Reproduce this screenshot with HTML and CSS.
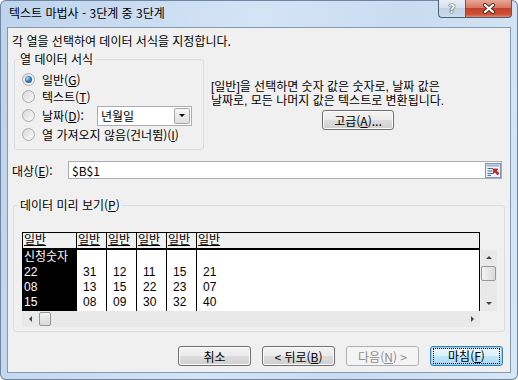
FILE: index.html
```html
<!DOCTYPE html>
<html lang="ko">
<head>
    <meta charset="UTF-8">
    <title>텍스트 마법사 - 3단계 중 3단계</title>
    <link rel="stylesheet" href="styles.css">
</head>
<body>

    <div class="window">
        <!-- 제목 표시줄 -->
        <div class="titlebar">
            <span class="title">텍스트 마법사 - 3단계 중 3단계</span>
            <div class="caption-btns">
                <span class="cap help">?</span>
                <span class="cap close">
                    <svg width="14" height="11" viewBox="0 0 14 11">
                        <path d="M3 2 L11 9 M11 2 L3 9" stroke="#4a2a22" stroke-width="4" stroke-linecap="round"/>
                        <path d="M3 2 L11 9 M11 2 L3 9" stroke="#fff" stroke-width="2.2" stroke-linecap="round"/>
                    </svg>
                </span>
            </div>
        </div>

        <div class="client">
            <p class="intro">각 열을 선택하여 데이터 서식을 지정합니다.</p>

            <!-- 열 데이터 서식 -->
            <div class="format-row">
                <fieldset class="group format-group">
                    <legend>열 데이터 서식</legend>
                    <div class="radio-row"><span class="radio on"></span>일반(<u>G</u>)</div>
                    <div class="radio-row"><span class="radio"></span>텍스트(<u>T</u>)</div>
                    <div class="radio-row date-row">
                        <span class="radio"></span><span class="date-label">날짜(<u>D</u>):</span>
                        <span class="combo">년월일<span class="combo-arrow"><span class="tri-down"></span></span></span>
                    </div>
                    <div class="radio-row"><span class="radio"></span>열 가져오지 않음(건너뜀)(<u>I</u>)</div>
                </fieldset>
                <div class="format-info">
                    <p class="desc">[일반]을 선택하면 숫자 값은 숫자로, 날짜 값은<br>날짜로, 모든 나머지 값은 텍스트로 변환됩니다.</p>
                    <button class="btn adv">고급(<u>A</u>)...</button>
                </div>
            </div>

            <!-- 대상 -->
            <div class="target">
                <span class="target-label">대상(<u>E</u>):</span>
                <span class="textbox">$B$1
                    <svg class="ref-icon" width="16" height="15" viewBox="0 0 16 15">
                        <rect x="0.5" y="0.5" width="15" height="14" fill="#e9eff7" stroke="#8797ab"/>
                        <rect x="1.5" y="1.5" width="13" height="2" fill="#9fb4cf"/>
                        <path d="M2.5 5.5 H8 M2.5 8 H7 M2.5 10.5 H8 M2.5 12.5 H6" stroke="#4d6f9c"/>
                        <path d="M8 6 L13 6 L11.5 7.5 L14 10.5 L12.5 12 L10 9 L8.5 10.5 Z" fill="#d8261c" stroke="#8b120c" stroke-width="0.6"/>
                    </svg>
                </span>
            </div>

            <!-- 데이터 미리 보기 -->
            <fieldset class="group preview-group">
                <legend>데이터 미리 보기(<u>P</u>)</legend>
                <div class="preview">
                    <div class="pv-head">
                        <span class="pv-cell c1"><u>일반</u></span>
                        <span class="pv-cell"><u>일반</u></span>
                        <span class="pv-cell"><u>일반</u></span>
                        <span class="pv-cell"><u>일반</u></span>
                        <span class="pv-cell"><u>일반</u></span>
                        <span class="pv-cell last"><u>일반</u></span>
                    </div>
                    <div class="pv-corner"></div>
                    <div class="pv-body">
                        <div class="pv-col c1 selected">
                            <div>신청숫자</div><div>22</div><div>08</div><div>15</div>
                        </div>
                        <div class="pv-col num"><div></div><div>31</div><div>13</div><div>08</div></div>
                        <div class="pv-col num"><div></div><div>12</div><div>15</div><div>09</div></div>
                        <div class="pv-col num"><div></div><div>11</div><div>22</div><div>30</div></div>
                        <div class="pv-col num"><div></div><div>15</div><div>23</div><div>32</div></div>
                        <div class="pv-col num last"><div></div><div>21</div><div>07</div><div>40</div></div>
                    </div>
                    <div class="vscroll">
                        <span class="sb-arrow"><span class="tri-up"></span></span>
                        <span class="sb-thumb"></span>
                        <span class="sb-arrow down"><span class="tri-down small"></span></span>
                    </div>
                    <div class="hscroll">
                        <span class="sb-arrow"><span class="tri-left"></span></span>
                        <span class="sb-thumb"></span>
                        <span class="sb-arrow right"><span class="tri-right"></span></span>
                    </div>
                    <div class="pv-corner"></div>
                </div>
            </fieldset>

            <!-- 하단 버튼 -->
            <div class="buttons">
                <button class="btn">취소</button>
                <button class="btn">&lt; 뒤로(<u>B</u>)</button>
                <button class="btn" disabled>다음(<u>N</u>) &gt;</button>
                <button class="btn default"><span class="focus">마침(<u>F</u>)</span></button>
            </div>
        </div>
    </div>

</body>
</html>
```

FILE: styles.css
```css
/* 기본 페이지 */
body {
    margin: 0;
    font-family: "Noto Sans CJK KR", "Malgun Gothic", sans-serif;
    font-size: 12px;
    color: #000;
}

p {
    margin: 0;
}

/* 창 테두리 (Aero) */
.window {
    width: 518px;
    height: 380px;
    box-sizing: border-box;
    display: flex;
    flex-direction: column;
    padding: 0 7px 7px;
    border-radius: 6px;
    background: linear-gradient(100deg, #bed4ec 0%, #d4e4f5 45%, #c9dcf0 70%, #d8e7f6 100%);
    box-shadow: inset 0 0 0 1px #6f86a3;
}

.titlebar {
    height: 27px;
    display: flex;
    align-items: flex-start;
}

.title {
    padding-left: 2px;
    line-height: 26px;
}

.caption-btns {
    display: flex;
    margin-left: auto;
    margin-right: -1px;
}

.cap {
    height: 18px;
    box-sizing: border-box;
    display: flex;
    align-items: center;
    justify-content: center;
    border: 1px solid #4f5f75;
    border-top: none;
}

.help {
    width: 27px;
    border-right: none;
    border-radius: 0 0 0 4px;
    background: linear-gradient(#e8eef6, #d6e1ee 45%, #c2d2e4 50%, #cddcec);
    color: #fff;
    font-family: "DejaVu Sans", sans-serif;
    font-weight: bold;
    font-size: 12px;
    text-shadow: 0 0 1px #2c3a4c, 0 0 1px #2c3a4c, 0 0 1px #2c3a4c;
}

.close {
    width: 47px;
    border-radius: 0 0 4px 0;
    background: linear-gradient(#e9a796, #d87662 45%, #c3402a 50%, #cf5138 85%, #e48a6f);
}

/* 대화 상자 본문 */
.client {
    flex: 1;
    background: #f0f0f0;
    border: 1px solid #8399b1;
}

.intro {
    margin: 6px 0 0 4px;
    line-height: 14px;
}

.group {
    margin: 0;
    border: 1px solid #d5dfe5;
    border-radius: 3px;
    box-sizing: border-box;
}

.group legend {
    padding: 0 2px;
    margin-left: -4px;
    line-height: 14px;
}

.format-row {
    display: flex;
    margin-top: 4px;
}

.format-group {
    width: 190px;
    margin-left: 6px;
    padding: 5px 0 6px 7px;
}

.radio-row {
    display: flex;
    align-items: center;
    height: 17px;
    white-space: nowrap;
}

.date-row {
    height: 21px;
}

.radio {
    width: 13px;
    height: 13px;
    box-sizing: border-box;
    margin-right: 7px;
    border-radius: 50%;
    border: 1px solid #a9acaf;
    background: linear-gradient(135deg, #d8d8d8, #fbfbfb);
    display: flex;
    align-items: center;
    justify-content: center;
}

.radio.on::before {
    content: "";
    width: 7px;
    height: 7px;
    border-radius: 50%;
    background: radial-gradient(circle at 35% 35%, #a6dcf6 0, #3b7fbd 45%, #0f3f6f 100%);
}

.date-label {
    width: 55px;
}

.combo {
    width: 95px;
    height: 20px;
    box-sizing: border-box;
    display: flex;
    align-items: center;
    padding-left: 3px;
    background: #fff;
    border: 1px solid #abadb3;
}

.combo-arrow {
    width: 16px;
    height: 16px;
    box-sizing: border-box;
    margin: 0 1px 0 auto;
    display: flex;
    align-items: center;
    justify-content: center;
    border: 1px solid #a7a7a7;
    border-radius: 2px;
    background: linear-gradient(#f6f6f6, #dedede);
}

.tri-down {
    width: 0;
    height: 0;
    border-left: 3px solid transparent;
    border-right: 3px solid transparent;
    border-top: 3px solid #000;
}

.tri-down.small {
    border-top-color: #444;
}

.tri-up {
    width: 0;
    height: 0;
    border-left: 3px solid transparent;
    border-right: 3px solid transparent;
    border-bottom: 3px solid #444;
}

.tri-left {
    width: 0;
    height: 0;
    border-top: 3px solid transparent;
    border-bottom: 3px solid transparent;
    border-right: 3px solid #444;
}

.tri-right {
    width: 0;
    height: 0;
    border-top: 3px solid transparent;
    border-bottom: 3px solid transparent;
    border-left: 3px solid #444;
}

.format-info {
    padding-left: 7px;
}

.desc {
    margin-top: 28px;
    font-family: "Liberation Sans", "Noto Sans CJK KR", sans-serif;
    line-height: 14px;
    white-space: nowrap;
}

/* 버튼 */
.btn {
    width: 73px;
    height: 20px;
    padding: 0;
    font-family: inherit;
    font-size: 12px;
    color: #000;
    border: 1px solid #707070;
    border-radius: 3px;
    background: linear-gradient(#f2f2f2 0%, #ebebeb 50%, #dddddd 51%, #cfcfcf 100%);
    box-shadow: inset 0 0 0 1px #fbfbfb;
}

.btn:disabled {
    color: #8d8d8d;
    border-color: #adb2b5;
    background: #f4f4f4;
    box-shadow: none;
}

.btn.default {
    border-color: #3c7fb1;
    background: linear-gradient(#eaf6fd 0%, #d9f0fc 50%, #bee6fd 51%, #a7d9f5 100%);
    box-shadow: inset 0 0 0 1px #8ad4f5;
    display: flex;
    align-items: center;
    justify-content: center;
}

.focus {
    width: 65px;
    height: 14px;
    line-height: 14px;
    outline: 1px dotted #000;
}

.adv {
    width: 72px;
    margin: 2px 0 0 111px;
}

/* 대상 */
.target {
    display: flex;
    align-items: center;
    height: 18px;
    margin-top: 11px;
    padding-left: 4px;
}

.target-label {
    width: 56px;
}

.textbox {
    width: 434px;
    height: 18px;
    box-sizing: border-box;
    display: flex;
    align-items: center;
    padding-left: 3px;
    background: #fff;
    border: 1px solid #abadb3;
}

.ref-icon {
    margin-left: auto;
}

/* 데이터 미리 보기 */
.preview-group {
    width: 492px;
    margin: 19px 0 0 5px;
    padding: 20px 0 4px 8px;
}

.preview {
    display: grid;
    grid-template-columns: 458px 16px;
    grid-template-rows: 18px 61px 16px;
    column-gap: 1px;
    font-family: "Liberation Sans", "Noto Sans CJK KR", sans-serif;
}

.pv-head {
    display: flex;
    box-sizing: border-box;
    border: 1px solid #000;
    border-bottom-width: 2px;
    line-height: 15px;
}

.pv-cell,
.pv-col {
    width: 30px;
    box-sizing: border-box;
    border-right: 1px solid #000;
    padding-left: 1px;
}

.pv-cell.c1,
.pv-col.c1 {
    width: 54px;
}

.pv-cell.last,
.pv-col.last {
    flex: 1;
    border-right: none;
}

.pv-body {
    display: flex;
    overflow: hidden;
    background: #fff;
    border-left: 1px solid #000;
    border-right: 1px solid #000;
    line-height: 15px;
}

.pv-col div {
    height: 15px;
}

.pv-col.num {
    padding-left: 6px;
}

.pv-col.selected {
    background: #000;
    color: #fff;
}

.vscroll,
.hscroll {
    display: flex;
    background: #e9e9e9;
}

.vscroll {
    flex-direction: column;
}

.sb-arrow {
    width: 16px;
    height: 15px;
    display: flex;
    align-items: center;
    justify-content: center;
}

.sb-arrow.down {
    margin-top: auto;
}

.sb-arrow.right {
    margin-left: auto;
}

.hscroll .sb-arrow {
    height: 16px;
}

.sb-thumb {
    box-sizing: border-box;
    border: 1px solid #979797;
    border-radius: 2px;
    background: linear-gradient(90deg, #f4f4f4, #d8d8d8);
}

.vscroll .sb-thumb {
    width: 15px;
    height: 15px;
    margin-top: 1px;
}

.hscroll .sb-thumb {
    width: 12px;
    height: 14px;
    margin: 1px 0 0 1px;
    background: linear-gradient(#f4f4f4, #d8d8d8);
}

.buttons {
    display: flex;
    justify-content: flex-end;
    gap: 11px;
    margin-top: 14px;
    padding-right: 7px;
}
```
